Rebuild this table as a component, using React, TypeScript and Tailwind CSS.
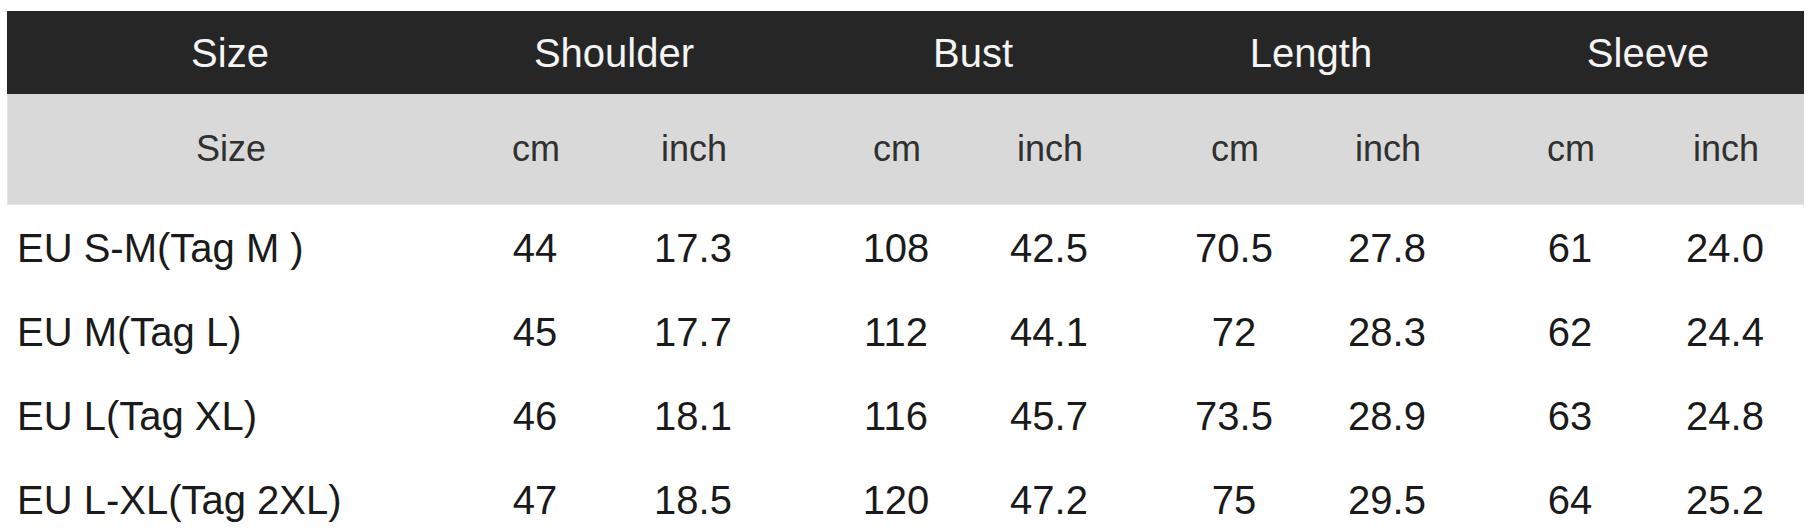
import React from 'react'

interface SizeRow {
  label: string
  values: string[]
}

const rows: SizeRow[] = [
  { label: 'EU S-M(Tag M )', values: ['44', '17.3', '108', '42.5', '70.5', '27.8', '61', '24.0'] },
  { label: 'EU M(Tag L)', values: ['45', '17.7', '112', '44.1', '72', '28.3', '62', '24.4'] },
  { label: 'EU L(Tag XL)', values: ['46', '18.1', '116', '45.7', '73.5', '28.9', '63', '24.8'] },
  { label: 'EU L-XL(Tag 2XL)', values: ['47', '18.5', '120', '47.2', '75', '29.5', '64', '25.2'] },
]

const groups = ['Shoulder', 'Bust', 'Length', 'Sleeve']

// padding per measurement column, pulls each cm/inch pair together
const cellPad = ['pl-[3px]', 'pr-[22px]', 'pl-[26px]', 'pr-[15px]', 'pl-[17px]', 'pr-[14px]', 'pl-[15px]', 'pr-[1px]']
const groupPad = ['pl-[3px] pr-[22px]', 'pl-[26px] pr-[15px]', 'pl-[17px] pr-[14px]', 'pl-[15px] pr-[1px]']

const gridCols = 'grid grid-cols-[446px_161px_180px_178px_169px_169px_168px_169px_157px]'

const App: React.FC = () => {
  return (
    <div
      className="w-[1812px] h-[532px] overflow-hidden bg-white pt-[11px] pl-[7px]"
      style={{ fontFamily: '"Liberation Sans", Arial, sans-serif' }}
    >
      <div className="w-[1797px]">
        {/* group header */}
        <div className={`${gridCols} h-[83px] items-center bg-[#262626] text-[40px] text-[#f4f4f4]`}>
          <div className="text-center">Size</div>
          {groups.map((g, i) => (
            <div key={g} className={`col-span-2 text-center ${groupPad[i]}`}>
              {g}
            </div>
          ))}
        </div>

        {/* unit header */}
        <div className={`${gridCols} h-[111px] items-center bg-[#d9d9d9] text-[36px] text-[#303030] border-l border-b border-[#e4e4e4]`}>
          <div className="text-center">Size</div>
          {groups.map((g, i) => (
            <React.Fragment key={g}>
              <div className={`text-center ${cellPad[i * 2]}`}>cm</div>
              <div className={`text-center ${cellPad[i * 2 + 1]}`}>inch</div>
            </React.Fragment>
          ))}
        </div>

        {/* size rows */}
        {rows.map(row => (
          <div key={row.label} className={`${gridCols} h-[84px] items-center text-[40px] text-[#1a1a1a]`}>
            <div className="pl-[10px] pt-[2px] whitespace-pre">{row.label}</div>
            {row.values.map((v, i) => (
              <div key={i} className={`text-center pt-[2px] ${cellPad[i]}`}>
                {v}
              </div>
            ))}
          </div>
        ))}
      </div>
    </div>
  )
}

export default App
